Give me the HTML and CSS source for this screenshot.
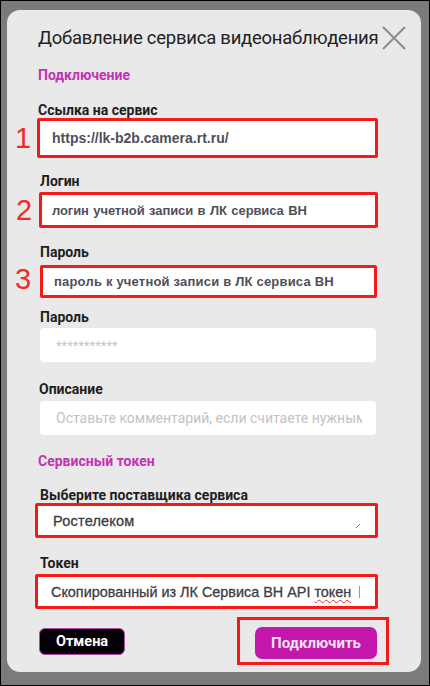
FILE: index.html
```html
<!DOCTYPE html>
<html lang="ru">
<head>
<meta charset="utf-8">
<link rel="stylesheet" href="styles.css">
</head>
<body>
<div class="page">
  <div class="modal">
    <div class="header">
      <div class="title">Добавление сервиса видеонаблюдения</div>
      <svg class="close" width="24" height="24" viewBox="0 0 24 24"><path d="M1 1 L23 23 M23 1 L1 23" stroke="#8c8c8c" stroke-width="2" fill="none"/></svg>
    </div>

    <div class="section s1">Подключение</div>

    <div class="label l1">Ссылка на сервис</div>
    <div class="box b1"><span class="num">1</span><span class="val">https://lk-b2b.camera.rt.ru/</span></div>

    <div class="label l2">Логин</div>
    <div class="box b2"><span class="num">2</span><span class="val">логин учетной записи в ЛК сервиса ВН</span></div>

    <div class="label l3">Пароль</div>
    <div class="box b3"><span class="num">3</span><span class="val">пароль к учетной записи в ЛК сервиса ВН</span></div>

    <div class="label l4">Пароль</div>
    <div class="input i4"><span class="ph stars">***********</span></div>

    <div class="label l5">Описание</div>
    <div class="input i5"><span class="ph">Оставьте комментарий, если считаете нужным</span></div>

    <div class="section s2">Сервисный токен</div>

    <div class="label l6">Выберите поставщика сервиса</div>
    <div class="box b6"><span class="val plain">Ростелеком</span>
      <svg class="grip" width="6" height="6" viewBox="0 0 6 6"><path d="M1 5 L5 1" stroke="#777" stroke-width="1"/></svg>
    </div>

    <div class="label l7">Токен</div>
    <div class="box b7"><span class="val plain">Скопированный из ЛК Сервиса ВН API <span class="spell">токен</span></span><span class="caret"></span></div>

    <div class="actions">
      <div class="btn cancel">Отмена</div>
      <div class="mark"><div class="btn ok">Подключить</div></div>
    </div>
  </div>
  <div class="side"></div>
</div>
</body>
</html>
```

FILE: styles.css
```css
* { box-sizing: border-box; }
html, body { margin: 0; padding: 0; }
body {
  width: 430px;
  height: 686px;
  overflow: hidden;
  background: #7b7b7b;
  border: 1px solid #000;
  font-family: Roboto, "Noto Sans", sans-serif;
}
.page {
  display: flex;
  padding: 9px 0 0 6px;
}
.modal {
  flex: none;
  width: 414px;
  height: 662px;
  background: #e9e9e9;
  border-radius: 13px;
  padding: 0 43px 0 31px;
  display: flex;
  flex-direction: column;
}
.header {
  margin-top: 16px;
  margin-right: -28px;
  height: 24px;
  display: flex;
  justify-content: space-between;
  align-items: center;
}
.title {
  flex: none;
  font-size: 18.5px;
  letter-spacing: -0.25px;
  line-height: 24px;
  color: #222;
  white-space: nowrap;
}
.close { flex: none; }
.section, .label {
  font-size: 14px;
  line-height: 16px;
  font-weight: 700;
  white-space: nowrap;
}
.section { color: #c233b3; }
.label { color: #1e1e1e; margin-left: 1px; }
.s1 { margin-top: 17px; }
.l1 { margin-top: 19px; margin-left: 0; }
.l2 { margin-top: 15px; margin-left: 2px; }
.l3 { margin-top: 16px; margin-left: 2px; }
.l4 { margin-top: 11px; margin-left: 2px; }
.l5 { margin-top: 19px; }
.s2 { margin-top: 18px; }
.l6 { margin-top: 18px; margin-left: 2px; }
.l7 { margin-top: 17px; margin-left: 2px; }

.box {
  position: relative;
  background: #fff;
  border: 3px solid #f51a1a;
  border-radius: 2px;
  display: flex;
  align-items: center;
  font-family: "Liberation Sans", Arial, sans-serif;
  white-space: nowrap;
}
.num {
  position: absolute;
  left: -25px;
  top: 50%;
  transform: translateY(-50%);
  font-family: "Liberation Sans", Arial, sans-serif;
  font-size: 29px;
  line-height: 30px;
  color: #ef2a2a;
}
.val {
  font-size: 14px;
  font-weight: 700;
  color: #4f4f5a;
}
.b1 { margin-left: -1px; width: 341px; height: 40px; padding-left: 12px; }
.b2 { margin-top: 3px; margin-left: 1px; width: 339px; height: 36px; padding-left: 10px; }
.b2 .num { left: -26px; }
.b2 .val { font-size: 13px; letter-spacing: -0.1px; word-spacing: 1px; }
.b3 { margin-top: 5px; margin-left: 2px; width: 337px; height: 33px; padding-left: 11px; }
.b3 .num { left: -28px; top: 40%; }
.b3 .val { font-size: 13px; letter-spacing: 0.2px; }

.b6 { margin-left: -3px; width: 343px; height: 35px; padding-left: 15px; }
.b7 { margin-top: 3px; margin-left: -3px; width: 343px; height: 35px; padding-left: 13px; }
.val.plain {
  font-weight: 400;
  font-size: 14.5px;
  color: #3d3d45;
  letter-spacing: 0.2px;
  -webkit-text-stroke: 0.3px #3d3d45;
}
.b7 .val.plain { font-size: 14.4px; letter-spacing: 0; }
.spell {
  text-decoration: underline wavy #e23030;
  text-decoration-thickness: 1px;
  text-underline-offset: 2px;
}
.grip {
  position: absolute;
  right: 14px;
  bottom: 6px;
}
.caret {
  margin-left: 8px;
  width: 1px;
  height: 12px;
  background: #999;
}

.input {
  background: #fff;
  border-radius: 4px;
  margin-left: 2px;
  width: 336px;
  height: 34px;
  display: flex;
  align-items: center;
  padding: 0 14px 0 16px;
  overflow: hidden;
  white-space: nowrap;
}
.i4 { margin-top: 3px; }
.i5 { margin-top: 4px; }
.ph {
  font-size: 14px;
  color: #c2c2c2;
}
.stars { font-size: 13px; color: #c6c6c6; }
.i5 .ph { display: block; overflow: hidden; min-width: 0; font-size: 14px; }

.actions {
  margin-top: 8px;
  margin-right: -11px;
  display: flex;
  justify-content: space-between;
  align-items: flex-start;
}
.btn {
  display: flex;
  align-items: center;
  justify-content: center;
  font-weight: 700;
  color: #fff;
  white-space: nowrap;
}
.cancel {
  margin-top: 11px;
  margin-left: 1px;
  width: 86px;
  height: 27px;
  background: #050005;
  border: 1px solid #b24aa8;
  border-radius: 6px;
  font-size: 14.5px;
}
.mark {
  border: 3px solid #f51a1a;
  padding: 7px 9px 3px 15px;
}
.ok {
  width: 122px;
  height: 32px;
  background: #c416ad;
  border-radius: 7px;
  font-size: 15px;
  color: #f4e4f1;
}
.side {
  flex: 1;
}
```
